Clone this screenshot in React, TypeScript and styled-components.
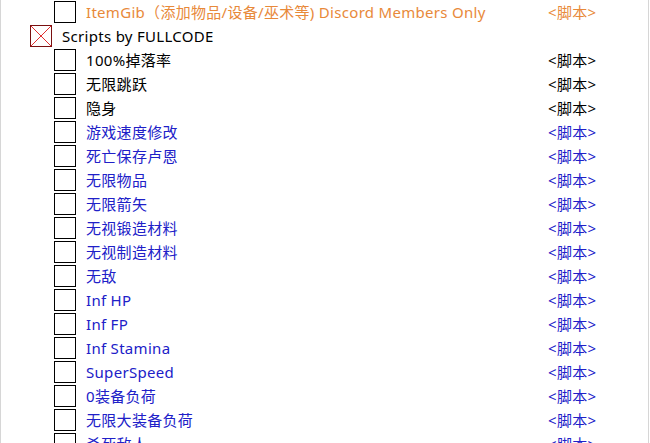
import React from "react";
import styled, { createGlobalStyle } from "styled-components";

const Global = createGlobalStyle`
  html, body { margin: 0; padding: 0; background: #fff; }
  body { font-family: "Noto Sans", "Noto Sans CJK SC", sans-serif; overflow: hidden; }
`;

type Tone = "orange" | "blue" | "black";
const colors: Record<Tone, string> = {
  orange: "#e8893a",
  blue: "#2020c8",
  black: "#000000",
};

const Panel = styled.div`
  width: 647px;
  height: 443px;
  border-left: 1px solid #d6d6d6;
  border-right: 1px solid #d6d6d6;
  overflow: hidden;
  background: #fff;
`;

const Row = styled.div<{ $level: number }>`
  display: grid;
  grid-template-columns: 547px 1fr;
  align-items: center;
  height: 24px;
  & > :first-child { padding-left: ${(p) => 29 + p.$level * 24}px; }
`;

const Tree = styled.div`
  display: flex;
  align-items: center;
  gap: 10px;
  min-width: 0;
`;

const Box = styled.span`
  box-sizing: border-box;
  flex: none;
  width: 22px;
  height: 22px;
  border: 1px solid #000;
  background: #fff;
`;

const CrossBox = styled.svg`
  flex: none;
  width: 22px;
  height: 22px;
  display: block;
`;

const Label = styled.span<{ $tone: Tone }>`
  font-size: 15px;
  line-height: 20px;
  letter-spacing: 0.3px;
  color: ${(p) => colors[p.$tone]};
  white-space: nowrap;
`;

const Script = styled.span<{ $tone: Tone }>`
  font-size: 15px;
  line-height: 20px;
  letter-spacing: 0.3px;
  color: ${(p) => colors[p.$tone]};
  white-space: nowrap;
`;

type Item = { label: string; tone: Tone; level: number; group?: boolean; script?: boolean };

const items: Item[] = [
  { label: "ItemGib（添加物品/设备/巫术等) Discord Members Only", tone: "orange", level: 1, script: true },
  { label: "Scripts by FULLCODE", tone: "black", level: 0, group: true },
  { label: "100%掉落率", tone: "black", level: 1, script: true },
  { label: "无限跳跃", tone: "black", level: 1, script: true },
  { label: "隐身", tone: "black", level: 1, script: true },
  { label: "游戏速度修改", tone: "blue", level: 1, script: true },
  { label: "死亡保存卢恩", tone: "blue", level: 1, script: true },
  { label: "无限物品", tone: "blue", level: 1, script: true },
  { label: "无限箭矢", tone: "blue", level: 1, script: true },
  { label: "无视锻造材料", tone: "blue", level: 1, script: true },
  { label: "无视制造材料", tone: "blue", level: 1, script: true },
  { label: "无敌", tone: "blue", level: 1, script: true },
  { label: "Inf HP", tone: "blue", level: 1, script: true },
  { label: "Inf FP", tone: "blue", level: 1, script: true },
  { label: "Inf Stamina", tone: "blue", level: 1, script: true },
  { label: "SuperSpeed", tone: "blue", level: 1, script: true },
  { label: "0装备负荷", tone: "blue", level: 1, script: true },
  { label: "无限大装备负荷", tone: "blue", level: 1, script: true },
  { label: "杀死敌人", tone: "blue", level: 1, script: true },
];

const Cross = () => (
  <CrossBox viewBox="0 0 22 22">
    <rect x="0.5" y="0.5" width="21" height="21" fill="#fff" stroke="#7a1010" />
    <line x1="1" y1="1" x2="21" y2="21" stroke="#e03030" strokeWidth="1" />
    <line x1="21" y1="1" x2="1" y2="21" stroke="#e03030" strokeWidth="1" />
  </CrossBox>
);

export default function App() {
  return (
    <>
      <Global />
      <Panel>
        {items.map((it, i) => (
          <Row key={i} $level={it.level}>
            <Tree>
              {it.group ? <Cross /> : <Box />}
              <Label $tone={it.tone}>{it.label}</Label>
            </Tree>
            {it.script ? <Script $tone={it.tone}>&lt;脚本&gt;</Script> : <span />}
          </Row>
        ))}
      </Panel>
    </>
  );
}
